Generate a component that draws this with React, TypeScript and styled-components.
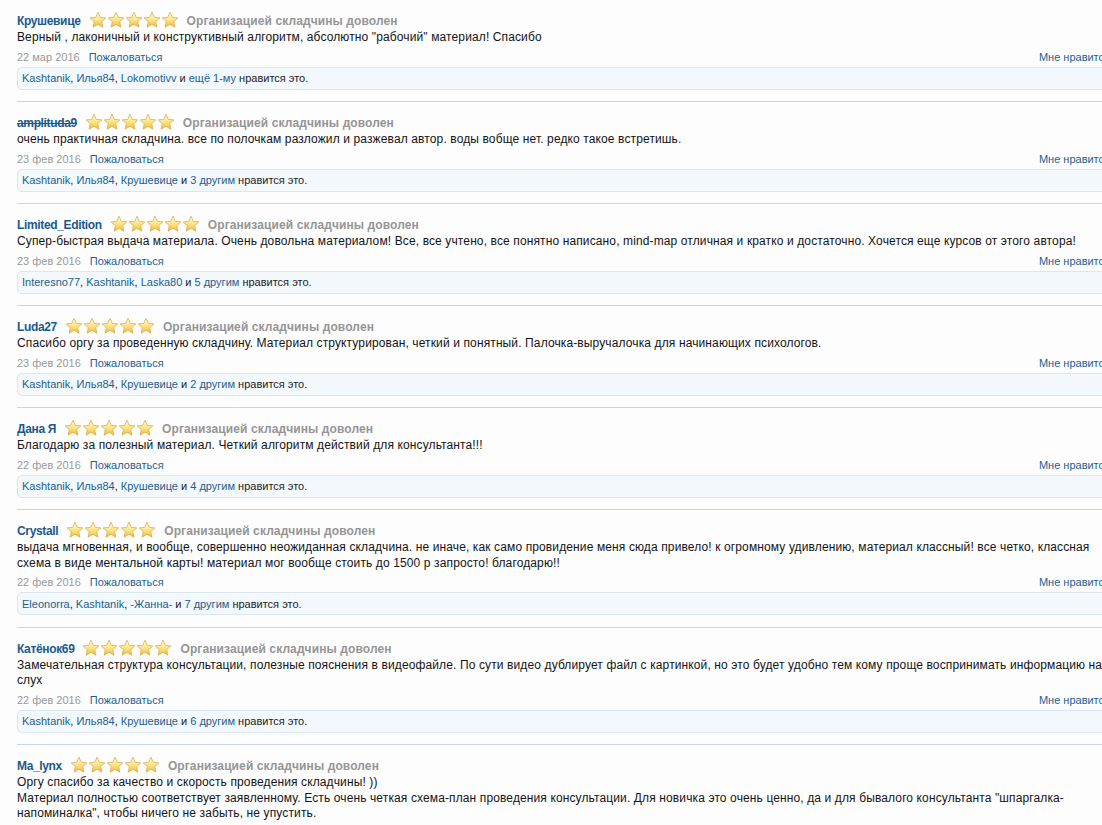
import React from "react";
import styled, { createGlobalStyle } from "styled-components";

const Global = createGlobalStyle`
  html, body { margin: 0; padding: 0; background: #fdfdfe; overflow: hidden; }
  body { font-family: "Liberation Sans", Arial, sans-serif; font-size: 12px; color: #141414; }
`;

const Page = styled.div`
  width: 1140px;
  padding-left: 17px;
`;

const Entry = styled.div`
  width: 1093px;
  padding-top: 13px;
  padding-bottom: 11.4px;
  border-bottom: 1px solid #ccd5df;
`;

const Header = styled.div`
  display: flex;
  align-items: center;
  height: 16px;
`;

const Name = styled.a<{ $banned?: boolean }>`
  font-weight: bold;
  font-size: 12px;
  letter-spacing: -0.35px;
  color: #1a5a8a;
  text-decoration: ${(p) => (p.$banned ? "line-through" : "none")};
  margin-right: 8px;
`;

const Stars = styled.span`
  display: inline-flex;
  margin-right: 8px;
  position: relative;
  top: -1px;
`;

const Verdict = styled.span`
  font-weight: bold;
  font-size: 12px;
  color: #959595;
  letter-spacing: 0.1px;
`;

const Message = styled.div`
  margin-top: 1px;
  line-height: 15.6px;
  font-size: 12px;
  letter-spacing: 0.12px;
  color: #141414;
  white-space: pre-line;
`;

const Meta = styled.div`
  display: flex;
  align-items: center;
  height: 16px;
  margin-top: 3px;
  font-size: 11px;
`;

const DateText = styled.span`
  color: #9a9a9a;
  margin-right: 9px;
`;

const MetaLink = styled.a<{ $right?: boolean }>`
  color: #1d5f8e;
  text-decoration: none;
  margin-left: ${(p) => (p.$right ? "auto" : "0")};
  white-space: nowrap;
`;

const LikeBox = styled.div`
  margin-top: 2px;
  height: 21px;
  display: flex;
  align-items: center;
  padding-left: 4px;
  background: #f3f8fc;
  border: 1px solid #dae6f1;
  border-radius: 5px;
  font-size: 11px;
  color: #222;
  width: 1110px;
`;

const LikeLink = styled.a`
  color: #1d5f8e;
  text-decoration: none;
`;

const Star: React.FC<{ id: string }> = ({ id }) => (
  <svg width="18" height="18" viewBox="0 0 24 24">
    <defs>
      <linearGradient id={id} x1="0" y1="0" x2="0" y2="1">
        <stop offset="0" stopColor="#fffbd8" />
        <stop offset="0.5" stopColor="#fce58a" />
        <stop offset="1" stopColor="#eebb3a" />
      </linearGradient>
    </defs>
    <path
      d="M12 1.6l3.1 6.9 7.4.7-5.6 5 1.7 7.4L12 17.7l-6.6 3.9 1.7-7.4-5.6-5 7.4-.7z"
      fill={`url(#${id})`}
      stroke="#d8aa48"
      strokeWidth="1"
      strokeLinejoin="round"
    />
  </svg>
);

type Item = {
  name: string;
  banned?: boolean;
  text: string;
  date: string;
  likers: string[];
  more: string;
};

const items: Item[] = [
  {
    name: "Крушевице",
    text: "Верный , лаконичный и конструктивный алгоритм, абсолютно \"рабочий\" материал! Спасибо",
    date: "22 мар 2016",
    likers: ["Kashtanik", "Илья84", "Lokomotivv"],
    more: "ещё 1-му",
  },
  {
    name: "amplituda9",
    banned: true,
    text: "очень практичная складчина. все по полочкам разложил и разжевал автор. воды вобще нет. редко такое встретишь.",
    date: "23 фев 2016",
    likers: ["Kashtanik", "Илья84", "Крушевице"],
    more: "3 другим",
  },
  {
    name: "Limited_Edition",
    text: "Супер-быстрая выдача материала. Очень довольна материалом! Все, все учтено, все понятно написано, mind-map отличная и кратко и достаточно. Хочется еще курсов от этого автора!",
    date: "23 фев 2016",
    likers: ["Interesno77", "Kashtanik", "Laska80"],
    more: "5 другим",
  },
  {
    name: "Luda27",
    text: "Спасибо оргу за проведенную складчину. Материал структурирован, четкий и понятный. Палочка-выручалочка для начинающих психологов.",
    date: "23 фев 2016",
    likers: ["Kashtanik", "Илья84", "Крушевице"],
    more: "2 другим",
  },
  {
    name: "Дана Я",
    text: "Благодарю за полезный материал. Четкий алгоритм действий для консультанта!!!",
    date: "22 фев 2016",
    likers: ["Kashtanik", "Илья84", "Крушевице"],
    more: "4 другим",
  },
  {
    name: "Crystall",
    text: "выдача мгновенная, и вообще, совершенно неожиданная складчина. не иначе, как само провидение меня сюда привело! к огромному удивлению, материал классный! все четко, классная схема в виде ментальной карты! материал мог вообще стоить до 1500 р запросто! благодарю!!",
    date: "22 фев 2016",
    likers: ["Eleonorra", "Kashtanik", "-Жанна-"],
    more: "7 другим",
  },
  {
    name: "Катёнок69",
    text: "Замечательная структура консультации, полезные пояснения в видеофайле. По сути видео дублирует файл с картинкой, но это будет удобно тем кому проще воспринимать информацию на слух",
    date: "22 фев 2016",
    likers: ["Kashtanik", "Илья84", "Крушевице"],
    more: "6 другим",
  },
  {
    name: "Ma_lynx",
    text: "Оргу спасибо за качество и скорость проведения складчины! ))\nМатериал полностью соответствует заявленному. Есть очень четкая схема-план проведения консультации. Для новичка это очень ценно, да и для бывалого консультанта \"шпаргалка-напоминалка\", чтобы ничего не забыть, не упустить.",
    date: "22 фев 2016",
    likers: ["Kashtanik", "Илья84", "Крушевице"],
    more: "5 другим",
  },
];

export default function App() {
  return (
    <Page>
      <Global />
      {items.map((it, i) => (
        <Entry key={i}>
          <Header>
            <Name $banned={it.banned}>{it.name}</Name>
            <Stars>
              {[0, 1, 2, 3, 4].map((s) => (
                <Star key={s} id={`g${i}_${s}`} />
              ))}
            </Stars>
            <Verdict>Организацией складчины доволен</Verdict>
          </Header>
          <Message>{it.text}</Message>
          <Meta>
            <DateText>{it.date}</DateText>
            <MetaLink>Пожаловаться</MetaLink>
            <MetaLink $right>Мне нравится</MetaLink>
          </Meta>
          <LikeBox>
            {it.likers.map((l, k) => (
              <React.Fragment key={k}>
                <LikeLink>{l}</LikeLink>
                {k < it.likers.length - 1 ? ",\u00a0" : "\u00a0"}
              </React.Fragment>
            ))}
            и&nbsp;<LikeLink>{it.more}</LikeLink>&nbsp;нравится это.
          </LikeBox>
        </Entry>
      ))}
    </Page>
  );
}
